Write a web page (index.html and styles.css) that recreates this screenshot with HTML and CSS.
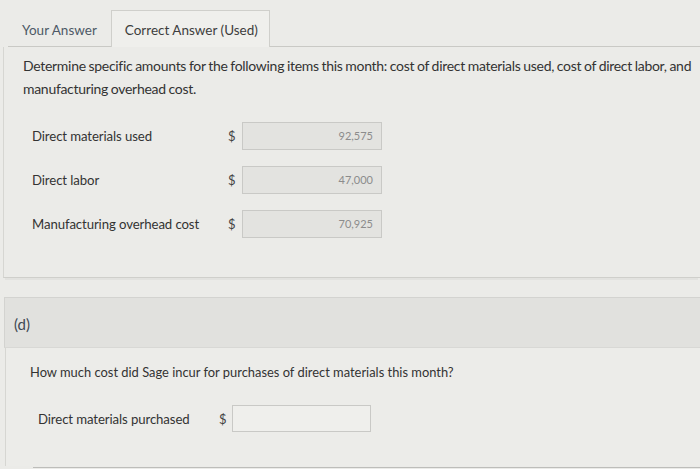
FILE: index.html
```html
<!DOCTYPE html>
<html>
<head>
<meta charset="utf-8">
<link rel="stylesheet" href="styles.css">
</head>
<body>
<div class="tabs">
  <div class="tab">Your Answer</div>
  <div class="tab active">Correct Answer (Used)</div>
</div>
<div class="panel">
  <p class="prompt">Determine specific amounts for the following items this month: cost of direct materials used, cost of direct labor, and manufacturing overhead cost.</p>
  <div class="grid">
    <div class="label">Direct materials used</div>
    <div class="cur">$</div>
    <div class="box filled">92,575</div>
    <div class="label">Direct labor</div>
    <div class="cur">$</div>
    <div class="box filled">47,000</div>
    <div class="label">Manufacturing overhead cost</div>
    <div class="cur">$</div>
    <div class="box filled">70,925</div>
  </div>
</div>
<div class="part-head">(d)</div>
<div class="panel2">
  <p class="question">How much cost did Sage incur for purchases of direct materials this month?</p>
  <div class="grid2">
    <div class="label">Direct materials purchased</div>
    <div class="cur">$</div>
    <div class="box empty"></div>
  </div>
  <div class="rule"></div>
</div>
</body>
</html>
```
FILE: styles.css
```css
html, body {
  margin: 0;
  padding: 0;
}
body {
  width: 700px;
  height: 469px;
  overflow: hidden;
  background: #ebebe8;
  font-family: Lato, "Open Sans", sans-serif;
  color: #3a3a3a;
}
.tabs {
  display: flex;
  align-items: flex-end;
  height: 47px;
  margin-left: 8px;
  border-bottom: 1px solid #c9c9c5;
  box-sizing: border-box;
}
.tab {
  font-size: 13.5px;
  color: #4d5966;
  padding: 0 14px 6px 14px;
  line-height: 20px;
  white-space: nowrap;
}
.active {
  color: #3d3d3d;
  background: #efefec;
  border: 1px solid #cfcfcb;
  border-bottom: none;
  padding: 9px 12px 7px 13px;
  margin-bottom: -1px;
  line-height: 20px;
  width: 132px;
}
.panel {
  margin-left: 3px;
  border-left: 1px solid #d6d6d2;
  border-bottom: 1px solid #cfcfcb;
  height: 231px;
  padding: 7px 0 0 19px;
  box-sizing: border-box;
  box-shadow: 0 4px 0 -2px #e2e2df;
}
.prompt {
  margin: 0;
  font-size: 14px;
  line-height: 23px;
  color: #333;
  letter-spacing: -0.3px;
  word-spacing: -0.5px;
}
.grid {
  display: grid;
  grid-template-columns: 196px 14px 140px;
  grid-auto-rows: 28px;
  row-gap: 16px;
  align-items: center;
  margin-top: 22px;
  margin-left: 9px;
}
.label {
  font-size: 13.2px;
  color: #333;
  white-space: nowrap;
  letter-spacing: -0.1px;
}
.cur {
  font-size: 13px;
  color: #444;
}
.box {
  height: 28px;
  box-sizing: border-box;
  border: 1px solid #c9c9c6;
  font-size: 11px;
  color: #8c8c8c;
  text-align: right;
  line-height: 26px;
  padding-right: 8px;
}
.filled {
  background: #e3e3e0;
}
.part-head {
  margin-top: 19px;
  margin-left: 4px;
  height: 51px;
  background: #e1e1de;
  border-top: 1px solid #d3d3d0;
  border-left: 1px solid #d3d3d0;
  border-bottom: 1px solid #d8d8d5;
  box-sizing: border-box;
  font-size: 15px;
  color: #3f4954;
  padding: 17px 0 0 9px;
}
.panel2 {
  margin-left: 5px;
  border-left: 1px solid #d6d6d2;
  height: 118px;
  background: #ecece9;
  padding: 15px 0 0 24px;
  box-sizing: border-box;
}
.question {
  margin: 0;
  font-size: 12.9px;
  line-height: 18px;
  color: #333;
}
.grid2 {
  display: grid;
  grid-template-columns: 181px 13px 139px;
  align-items: center;
  margin-top: 24px;
  margin-left: 8px;
}
.empty {
  height: 27px;
  background: #efefec;
}
.rule {
  margin-top: 35px;
  margin-left: 3px;
  border-top: 1px solid #bdbdba;
}
```
